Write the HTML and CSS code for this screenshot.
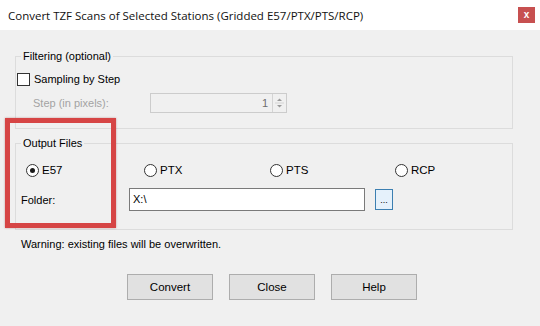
FILE: index.html
```html
<!doctype html>
<html>
	<head>
		<meta charset="UTF-8">
		<title>Convert TZF Scans</title>
		<link rel="stylesheet" href="styles.css">
	</head>

	<body>
		<div class="window">
			<div class="titlebar">
				<span class="title">Convert TZF Scans of Selected Stations (Gridded E57/PTX/PTS/RCP)</span>
				<span class="close">x</span>
			</div>
			<div class="content">
				<fieldset class="group filter">
					<legend>Filtering (optional)</legend>
					<label class="check"><span class="box"></span>Sampling by Step</label>
					<div class="step">
						<span class="muted">Step (in pixels):</span>
						<div class="spin">
							<span class="val">1</span>
							<span class="arrows">
								<svg width="9" height="16" viewBox="0 0 9 16">
									<path d="M2 6 L4.5 3.5 L7 6 Z" fill="#9a9a9a"/>
									<path d="M2 10 L4.5 12.5 L7 10 Z" fill="#9a9a9a"/>
									<line x1="0" y1="8" x2="9" y2="8" stroke="#d4d4d4"/>
								</svg>
							</span>
						</div>
					</div>
				</fieldset>
				<fieldset class="group output">
					<legend>Output Files</legend>
					<div class="radios">
						<label class="radio on"><span class="dot"></span>E57</label>
						<label class="radio"><span class="dot"></span>PTX</label>
						<label class="radio"><span class="dot"></span>PTS</label>
						<label class="radio"><span class="dot"></span>RCP</label>
					</div>
					<div class="folder">
						<span class="lbl">Folder:</span>
						<div class="input">X:\</div>
						<span class="browse">...</span>
					</div>
				</fieldset>
				<p class="warn">Warning: existing files will be overwritten.</p>
				<div class="buttons">
					<span class="btn">Convert</span>
					<span class="btn">Close</span>
					<span class="btn">Help</span>
				</div>
			</div>
			<!-- red annotation frame -->
			<div class="mark"></div>
		</div>
	</body>

</html>
```
FILE: styles.css
```css
* {
	margin: 0;
	padding: 0;
	box-sizing: border-box;
}

body {
	width: 540px;
	height: 326px;
	overflow: hidden;
	background-color: #f0f0f0;
	font-family: "Liberation Sans", Arial, sans-serif;
	font-size: 11px;
	color: #000;
}

.window {
	position: relative;
	width: 540px;
	height: 326px;
}

.titlebar {
	display: flex;
	align-items: center;
	height: 30px;
	padding-left: 8px;
	background-color: #fff;
}

.title {
	font-family: "Open Sans", "Noto Sans", sans-serif;
	font-size: 11.5px;
	color: #111;
}

.close {
	width: 17px;
	height: 16px;
	margin-left: auto;
	margin-right: 5px;
	margin-top: -1px;
	background-color: #c75050;
	color: #fff;
	font-weight: bold;
	font-size: 10px;
	line-height: 15px;
	text-align: center;
}

.content {
	padding: 20px 27px 0 15px;
}

.group {
	border: 1px solid #dcdcdc;
	padding: 0;
}

.group legend {
	margin-left: 5px;
	padding: 0 2px;
	line-height: 13px;
}

.filter {
	padding-bottom: 15px;
}

.check {
	display: flex;
	align-items: center;
	height: 13px;
	margin-top: 10px;
	margin-left: 1px;
	line-height: 13px;
}

.check .box {
	width: 13px;
	height: 13px;
	margin-right: 4px;
	border: 1px solid #333;
	background-color: #fff;
}

.step {
	display: flex;
	align-items: center;
	margin-top: 7px;
	padding-left: 17px;
}

.muted {
	width: 117px;
	color: #a3a3a3;
}

.spin {
	display: flex;
	align-items: center;
	width: 137px;
	height: 20px;
	border: 1px solid #cccccc;
	background-color: #f0f0f0;
}

.spin .val {
	flex: 1;
	text-align: right;
	padding-right: 4px;
	color: #6d6d6d;
}

.spin .arrows {
	display: flex;
	align-items: center;
	justify-content: center;
	width: 14px;
	height: 18px;
	border-left: 1px solid #d4d4d4;
}

.output {
	margin-top: 8px;
	padding-bottom: 18px;
}

.radios {
	display: grid;
	grid-template-columns: 118px 126px 125px auto;
	margin-top: 14px;
	padding-left: 10px;
	height: 13px;
}

.radio {
	display: flex;
	align-items: center;
	line-height: 13px;
	font-size: 11.5px;
}

.radio .dot {
	position: relative;
	width: 13px;
	height: 13px;
	margin-right: 3px;
	border: 1px solid #333;
	border-radius: 50%;
	background-color: #fff;
}

.radio.on .dot:after {
	content: "";
	position: absolute;
	left: 3px;
	top: 3px;
	width: 5px;
	height: 5px;
	border-radius: 50%;
	background-color: #1a1a1a;
}

.folder {
	display: flex;
	align-items: center;
	margin-top: 11px;
	padding-left: 5px;
}

.folder .lbl {
	width: 108px;
}

.folder .input {
	width: 236px;
	height: 23px;
	padding-left: 3px;
	border: 1px solid #7a7a7a;
	background-color: #fff;
	line-height: 21px;
}

.browse {
	width: 18px;
	height: 21px;
	margin-left: 10px;
	border: 1px solid #3c7fb1;
	background-color: #e5f1fb;
	text-align: center;
	line-height: 20px;
	font-size: 9px;
}

.warn {
	margin-top: 8px;
	margin-left: 6px;
	line-height: 13px;
}

.buttons {
	display: flex;
	gap: 16px;
	margin-top: 23px;
	padding-left: 112px;
}

.btn {
	width: 86px;
	height: 26px;
	border: 1px solid #adadad;
	background-color: #e1e1e1;
	text-align: center;
	line-height: 24px;
	font-size: 11.5px;
}

.mark {
	position: absolute;
	left: 5px;
	top: 118px;
	width: 111px;
	height: 110px;
	border: 5px solid #d64545;
	box-shadow: 0 0 2px rgba(120, 0, 0, .35);
}
```
